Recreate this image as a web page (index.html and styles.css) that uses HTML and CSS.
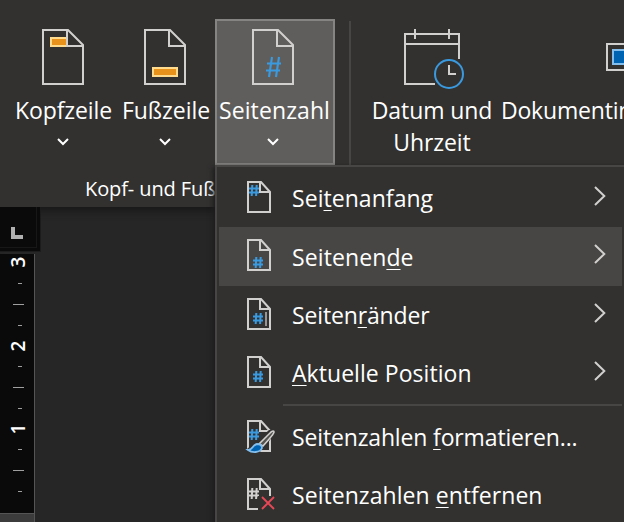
FILE: index.html
```
<!DOCTYPE html>
<html lang="de">
<head>
<meta charset="utf-8">
<title>Kopf- und Fußzeile</title>
<link rel="stylesheet" href="styles.css">
</head>
<body>
<svg class="defs" width="0" height="0" aria-hidden="true">
  <symbol id="page" viewBox="0 0 42 56"><path d="M1 1H26L41 16V55H1ZM25 1V17H41" fill="none" stroke="#d2d0ce" stroke-width="2"/></symbol>
  <symbol id="leaf" viewBox="0 0 24 32"><path d="M1 1H14L23 11V31H1ZM13 1V11H23" fill="none" stroke="#d2d0ce" stroke-width="2"/></symbol>
  <symbol id="hash" viewBox="0 0 10 11"><path d="M3.3 0L2.7 11M7.7 0L7.1 11M0 3.5H10M0 7.5H10" fill="none" stroke="currentColor" stroke-width="2"/></symbol>
  <symbol id="down" viewBox="0 0 12 8"><path d="M1 1L6 6L11 1" fill="none" stroke="#fff" stroke-width="2"/></symbol>
  <symbol id="right" viewBox="0 0 12 20"><path d="M1 1L10.3 10L1 19" fill="none" stroke="#d2d0ce" stroke-width="2"/></symbol>
</svg>
<div class="app">
  <header class="ribbon">
    <div class="commands">
      <button class="command header-command">
        <svg class="icon" width="42" height="56"><rect x="9" y="9" width="18" height="8" fill="#e8921c" stroke="#ffdb8d" stroke-width="2"/><path d="M25 1V17H41L26 1Z" fill="#323130"/><use href="#page" width="42" height="56"/></svg>
        <span class="label">Kopfzeile</span>
        <svg class="down" width="12" height="8"><use href="#down" width="12" height="8"/></svg>
      </button>
      <button class="command footer-command">
        <svg class="icon" width="42" height="56"><use href="#page" width="42" height="56"/><rect x="9" y="39" width="24" height="8" fill="#e8921c" stroke="#ffdb8d" stroke-width="2"/></svg>
        <span class="label">Fußzeile</span>
        <svg class="down" width="12" height="8"><use href="#down" width="12" height="8"/></svg>
      </button>
      <button class="command number-command open">
        <svg class="icon" width="42" height="56"><use href="#page" width="42" height="56"/><path d="M20 28L17 48M27 28L24 48M15 34.5H29M14 41.5H28" fill="none" stroke="#3a9ae0" stroke-width="2.1"/></svg>
        <span class="label">Seitenzahl</span>
        <svg class="down" width="12" height="8"><use href="#down" width="12" height="8"/></svg>
      </button>
      <div class="divider"></div>
      <button class="command date-command">
        <svg class="icon" width="56" height="56"><path d="M55 30V5H1V55H31M1 15H56M11 0V10M45 0V10" fill="none" stroke="#d2d0ce" stroke-width="2"/><circle cx="45" cy="45" r="14" fill="none" stroke="#3a9ae0" stroke-width="2"/><path d="M45 36V45H52" fill="none" stroke="#d2d0ce" stroke-width="2"/></svg>
        <span class="label">Datum und<br>Uhrzeit</span>
      </button>
      <button class="command info-command">
        <svg class="icon" width="48" height="56"><rect x="1" y="15" width="46" height="26" fill="none" stroke="#d2d0ce" stroke-width="2"/><rect x="7" y="21" width="34" height="14" fill="#0063b1" stroke="#83beec" stroke-width="2"/></svg>
        <span class="label">Dokumentinformationen</span>
      </button>
    </div>
    <div class="group-name">Kopf- und Fußzeile</div>
  </header>
  <main class="workspace">
    <div class="tab-stop"><svg width="12" height="12"><path d="M0 0H4V8H12V12H0Z" fill="#b0b0b0"/></svg></div>
    <svg class="ruler" width="35" height="268">
      <path d="M0 0H34V259H0Z" fill="#0a0a0a"/><path d="M0 260H34V268H0Z" fill="#3c3c3c"/>
      <path d="M34.5 0V268M0 259.5H34" stroke="#555" fill="none"/>
      <path d="M18 29.5H22M13 50.5H24M18 71.5H22M18 112.5H22M13 133.5H24M18 154.5H22M18 195.5H22M13 216.5H24M18 237.5H22" stroke="#a0a0a0"/>
      <text transform="translate(25 8) rotate(-90)">3</text>
      <text transform="translate(25 92) rotate(-90)">2</text>
      <text transform="translate(25 175) rotate(-90)">1</text>
    </svg>
  </main>
  <nav class="menu">
    <a class="item"><svg class="item-icon" width="30" height="34"><use href="#leaf" width="24" height="32"/><use class="blue" href="#hash" x="2" y="4" width="10" height="11"/></svg><span class="text t1">Sei<u>t</u>enanfang</span><svg class="right" width="12" height="20"><use href="#right" width="12" height="20"/></svg></a>
    <a class="item active"><svg class="item-icon" width="30" height="34"><use href="#leaf" width="24" height="32"/><use class="blue" href="#hash" x="6" y="18" width="10" height="11"/></svg><span class="text t2">Seitenen<u>d</u>e</span><svg class="right" width="12" height="20"><use href="#right" width="12" height="20"/></svg></a>
    <a class="item"><svg class="item-icon" width="30" height="34"><use href="#leaf" width="24" height="32"/><use class="blue" href="#hash" x="6" y="15" width="10" height="11"/><path d="M19 14V28" stroke="#979593" stroke-width="2"/></svg><span class="text t3">Seiten<u>r</u>änder</span><svg class="right" width="12" height="20"><use href="#right" width="12" height="20"/></svg></a>
    <a class="item"><svg class="item-icon" width="30" height="34"><use href="#leaf" width="24" height="32"/><use class="blue" href="#hash" x="6" y="15" width="10" height="11"/></svg><span class="text t4"><u>A</u>ktuelle Position</span><svg class="right" width="12" height="20"><use href="#right" width="12" height="20"/></svg></a>
    <div class="separator"></div>
    <a class="item"><svg class="item-icon" width="30" height="34"><use href="#leaf" width="24" height="32"/><use class="blue" href="#hash" x="2" y="9" width="10" height="11"/><path d="M0 29L10 21L22 10L28 10L23 20L14 30L12 34H0Z" fill="#323130"/><path d="M12 24L24 12Q27 10 27 12Q27 14 16 26Z" fill="#55534f" stroke="#d2d0ce" stroke-width="1.6"/><path d="M1 30C6 30 5 25 10 24Q15 24 15 28C13 33 5 33 1 30Z" fill="#0063b1" stroke="#83beec" stroke-width="1.8"/></svg><span class="text t5">Seitenzahlen <u>f</u>ormatieren...</span></a>
    <a class="item"><svg class="item-icon" width="30" height="34"><use href="#leaf" width="24" height="32"/><use class="gray" href="#hash" x="2" y="10" width="10" height="11"/><path d="M11 18H30V34H11Z" fill="#323130"/><path d="M15 19L27 31M27 19L15 31" stroke="#e74856" stroke-width="1.8"/></svg><span class="text t6">Seitenzahlen <u>e</u>ntfernen</span></a>
  </nav>
</div>
</body>
</html>
```

FILE: styles.css
```
* { box-sizing: border-box; }
body { margin: 0; background: #262626; color: #fff; font-family: "Open Sans", "Noto Sans", sans-serif; }
.defs { display: block; }
.app { position: relative; width: 624px; height: 522px; overflow: hidden; }
.ribbon { height: 207px; padding-top: 19px; background: #323130; box-shadow: 0 1px 10px #111; position: relative; }
.commands { display: flex; height: 146px; align-items: stretch; }
.command { display: flex; flex: none; flex-direction: column; align-items: center; padding: 8px 0 0; border: 2px solid transparent; background: none; color: inherit; font: 23px/32px "Open Sans", "Noto Sans", sans-serif; letter-spacing: -.1px; white-space: nowrap; }
.icon { flex: none; overflow: visible; }
.label { margin-top: 9px; }
.down { margin-top: 12px; }
.header-command { width: 108px; margin-left: 9px; }
.header-command .label { padding-left: 1px; }
.footer-command { width: 96px; }
.footer-command .label { padding-left: 2px; letter-spacing: -.05px; }
.number-command { width: 120px; margin-left: 2px; padding-right: 4px; }
.number-command .label { padding-left: 3px; letter-spacing: .1px; }
.open { border-color: #868482; background: #605e5c; }
.divider { flex: none; width: 2px; height: 144px; margin: 2px 0 0 14px; background: #484644; }
.date-command { width: 132px; margin-left: 15px; }
.info-command { width: 256px; align-items: flex-start; margin-left: 1px; letter-spacing: -.2px; }
.info-command .icon { margin-left: 105px; }
.group-name { padding-left: 85px; margin-top: 10px; font-size: 20px; line-height: 27px; letter-spacing: -.1px; }
.workspace { height: 315px; background: #262626; box-shadow: inset 0 10px 10px -7px #161616; position: relative; }
.tab-stop { width: 41px; height: 45px; padding: 20px 0 0 11px; background: #0a0a0a; border: solid #1c1c1c; border-width: 0 1px 1px 0; box-shadow: inset -3px -3px #0a0a0a, inset -4px -4px #171717; }
.tab-stop svg { display: block; }
.ruler { display: block; margin-top: 2px; }
.ruler text { fill: #fff; font-size: 19px; font-weight: 600; text-anchor: middle; }
.menu { position: absolute; left: 215px; top: 165px; width: 420px; height: 370px; padding: 2px 0 0 2px; border: solid #484644; border-width: 2px 0 0 2px; background: #323130; box-shadow: -2px 2px 5px #1c1c1c; }
.item { display: flex; height: 58.4px; width: 403px; padding: 12px 16px 0 28px; }
.active { background: #484644; }
.item-icon { flex: none; overflow: visible; }
.text { margin-left: 15px; font-size: 23px; line-height: 34px; letter-spacing: .05px; white-space: nowrap; }
.t2 { letter-spacing: .1px; padding-top: 1px; }
.t3, .t5 { letter-spacing: -.15px; }
.text u { text-decoration: underline; text-decoration-thickness: 1px; text-underline-offset: 3px; text-decoration-skip-ink: none; }
.right { margin: 5px 0 0 auto; }
.blue { color: #3a9ae0; }
.gray { color: #d2d0ce; }
.separator { width: 339px; height: 2px; margin: 1px 0 2px 64px; background: #484644; }
```
